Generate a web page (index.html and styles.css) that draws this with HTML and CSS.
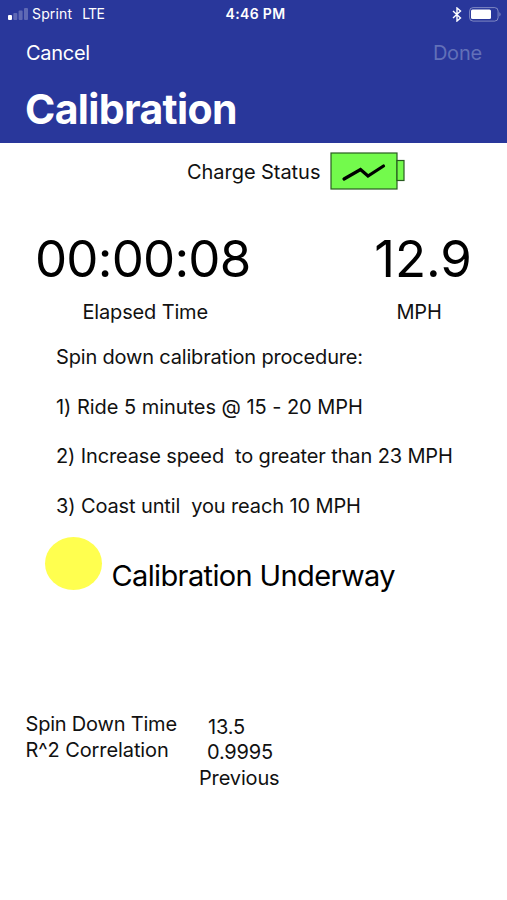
FILE: index.html
```html
<!DOCTYPE html>
<html lang="en">
<head>
<meta charset="utf-8">
<title>Calibration</title>
<link rel="stylesheet" href="styles.css">
</head>
<body>
<header class="header">
  <div class="status">
    <div class="carrier">
      <svg class="signal" width="21" height="12" viewBox="0 0 21 12"><rect x="0" y="7" width="4" height="5" rx="1" fill="#fff"/><g fill="#fff" opacity=".25"><rect x="5.3" y="5" width="4" height="7" rx="1"/><rect x="10.6" y="2.5" width="4" height="9.5" rx="1"/><rect x="16" y="0" width="4" height="12" rx="1"/></g></svg>
      <span class="operator">Sprint</span><span class="network">LTE</span>
    </div>
    <span class="clock">4:46 PM</span>
    <div class="power">
      <svg width="10" height="15" viewBox="0 0 10 15" fill="none" stroke="#fff" stroke-width="1.4"><path d="M1 4l7.500 7-3.500 3V1l3.500 3L1 11"/></svg>
      <svg class="battery" width="33" height="15" viewBox="0 0 33 15"><rect x=".6" y=".6" width="28.500" height="13.500" rx="3.500" fill="none" stroke="#fff" stroke-opacity=".4"/><rect x="2" y="2.500" width="20" height="9.500" rx="1.500" fill="#fff"/><path d="M30.500 5q2 2.300 0 4.600z" fill="#fff" opacity=".5"/></svg>
    </div>
  </div>
  <nav class="nav"><span class="cancel">Cancel</span><span class="disabled">Done</span></nav>
  <h1 class="title">Calibration</h1>
</header>
<main>
  <div class="charge">
    <span class="charge-label">Charge Status</span>
    <svg width="76" height="40" viewBox="0 0 76 40" stroke="#285c20" stroke-width="1.2"><rect x="1" y="1" width="66" height="36" fill="#73fa4c"/><rect x="67" y="8.500" width="7" height="20" fill="#73fa4c"/><path d="M14 27l16.500-9.500 7.500 6.500 15.500-10" fill="none" stroke="#000" stroke-width="3.200" stroke-linecap="round"/></svg>
  </div>
  <section class="readings">
    <div class="reading elapsed"><span class="value">00:00:08</span><span class="label">Elapsed Time</span></div>
    <div class="reading speed"><span class="value">12.9</span><span class="label">MPH</span></div>
  </section>
  <section class="procedure">
    <p class="intro">Spin down calibration procedure:</p>
    <p class="ride">1) Ride 5 minutes @ 15 - 20 MPH</p>
    <p class="increase">2) Increase speed &nbsp;to greater than 23 MPH</p>
    <p class="coast">3) Coast until &nbsp;you reach 10 MPH</p>
  </section>
  <section class="state"><span class="light"></span><span class="state-text">Calibration Underway</span></section>
  <section class="results">
    <div class="names"><div>Spin Down Time</div><div class="correlation-name">R^2 Correlation</div></div>
    <div class="values"><div class="time">13.5</div><div class="correlation">0.9995</div><div class="previous">Previous</div></div>
  </section>
</main>
</body>
</html>
```
FILE: styles.css
```css
* { box-sizing: border-box; }
body { margin: 0; background: #fff; color: #111; font: 20px/26px Inter, sans-serif; width: 507px; height: 900px; overflow: hidden; white-space: nowrap; }
p, h1 { margin: 0; }
.header { height: 142.5px; background: #29379b; color: #fff; }
.status { height: 28px; display: grid; grid-template-columns: 1fr auto 1fr; align-items: center; padding: 0 6px 0 8px; font-size: 14px; line-height: 20px; }
.carrier { display: flex; align-items: center; }
.operator { margin-left: 3px; letter-spacing: .15px; }
.network { margin-left: 10px; letter-spacing: -.7px; }
.clock { font-weight: 600; letter-spacing: .35px; padding-left: 2px; }
.power { display: flex; justify-content: flex-end; align-items: center; gap: 7px; margin-right: -1px; }
.nav { height: 49px; padding: 0 25px 0 26px; display: flex; justify-content: space-between; align-items: center; }
.cancel { letter-spacing: -.3px; }
.disabled { color: #6270b8; letter-spacing: -.2px; }
.title { padding-left: 25px; font-size: 41px; line-height: 50px; margin-top: 7px; font-weight: 700; letter-spacing: -.65px; }
.charge { display: flex; height: 58.5px; padding: 9.5px 0 0 187px; gap: 9px; }
.charge-label { width: 134px; padding-top: 7px; letter-spacing: -.05px; }
.readings { display: flex; justify-content: space-between; height: 143px; padding: 28px 35px 0 35px; }
.reading { display: flex; flex-direction: column; align-items: center; }
.value { font-size: 51px; line-height: 60px; color: #000; }
.elapsed .value { letter-spacing: -.8px; }
.label { margin-top: 10px; letter-spacing: -.15px; }
.elapsed .label { padding-left: 5px; }
.speed .label { margin-right: 8px; }
.procedure { padding-left: 56px; height: 193px; display: flex; flex-direction: column; gap: 23.5px; }
.intro { letter-spacing: -.18px; }
.ride { letter-spacing: -.04px; }
.increase { letter-spacing: -.13px; }
.coast { letter-spacing: -.12px; }
.state { display: flex; padding-left: 45px; height: 174px; }
.light { width: 57px; height: 53px; border-radius: 50%; background: #ffff4f; }
.state-text { margin: 20px 0 0 9.5px; font-size: 29px; line-height: 38px; letter-spacing: -.63px; color: #000; }
.results { display: flex; padding-left: 25.5px; letter-spacing: -.2px; }
.names { width: 152px; }
.correlation-name { letter-spacing: -.1px; }
.values { margin-top: 3px; padding-left: 21.5px; }
.time { padding-left: 9px; }
.correlation { padding-left: 8px; line-height: 25px; }
.previous { letter-spacing: -.15px; }
```
